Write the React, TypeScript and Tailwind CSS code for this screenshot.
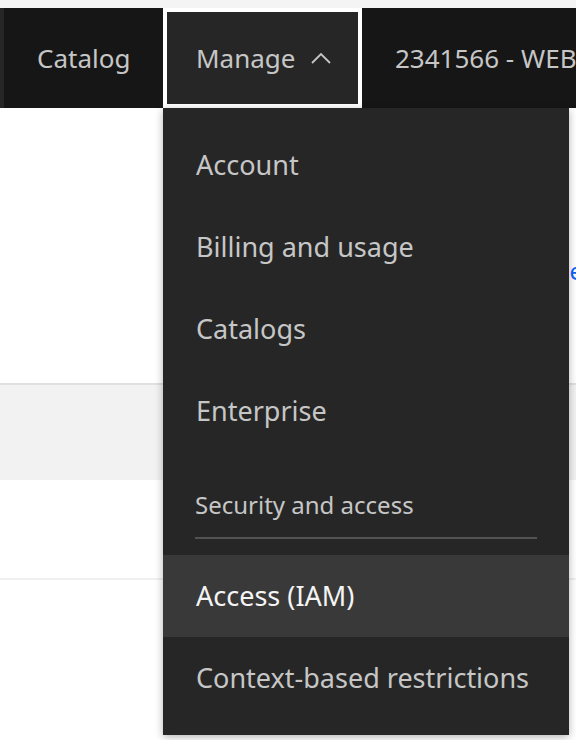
const items = ['Account', 'Billing and usage', 'Catalogs', 'Enterprise'];

function ManageMenu() {
  return (
    <div className="absolute left-[163px] top-[108px] w-[406px] bg-[#262626] py-4 shadow-[0_2px_8px_rgba(0,0,0,0.3)]">
      {items.map((item) => (
        <div key={item} className="flex h-[82px] items-center whitespace-nowrap px-[33px] text-[27px] text-[#c6c6c6]">
          {item}
        </div>
      ))}
      <div className="mx-[32px] flex h-[87px] items-end border-b-2 border-[#525252] pb-[14px] text-[24px] text-[#c6c6c6]">
        Security and access
      </div>
      <div className="mt-4 flex h-[82px] items-center whitespace-nowrap bg-[#393939] px-[33px] text-[27px] text-[#f4f4f4]">
        Access (IAM)
      </div>
      <div className="flex h-[82px] items-center whitespace-nowrap px-[33px] text-[27px] text-[#c6c6c6]">
        Context-based restrictions
      </div>
    </div>
  );
}

export default function App() {
  return (
    <div className="relative h-[740px] w-[576px] overflow-hidden bg-white font-['Noto_Sans',sans-serif]">
      <div className="h-2 bg-[#f4f4f4]" />
      <header className="flex h-[100px] bg-[#161616] text-[26px] text-[#c6c6c6]">
        <div className="w-1 shrink-0 bg-[#262626]" />
        <div className="flex w-[159px] shrink-0 items-center pl-[33px]">Catalog</div>
        <div className="flex w-[199px] shrink-0 items-center border-4 border-white bg-[#262626] pl-[29px]">
          Manage
          <svg className="ml-[16px]" width="20" height="12" viewBox="0 0 20 12" fill="none">
            <polyline points="1,11 10,2 19,11" stroke="#c6c6c6" strokeWidth="1.8" />
          </svg>
        </div>
        <div className="flex shrink-0 items-center whitespace-nowrap pl-[33px]">2341566 - WEB</div>
      </header>
      <div className="flex h-[275px] items-start justify-end">
        <span className="mt-[145px] mr-[-7px] whitespace-nowrap text-[24px] text-[#0f62fe]">View usage</span>
      </div>
      <div className="h-[97px] border-t-2 border-[#e0e0e0] bg-[#f2f2f2]" />
      <div className="h-[100px] border-b-2 border-[#f0f0f0] bg-white" />
      <ManageMenu />
    </div>
  );
}
